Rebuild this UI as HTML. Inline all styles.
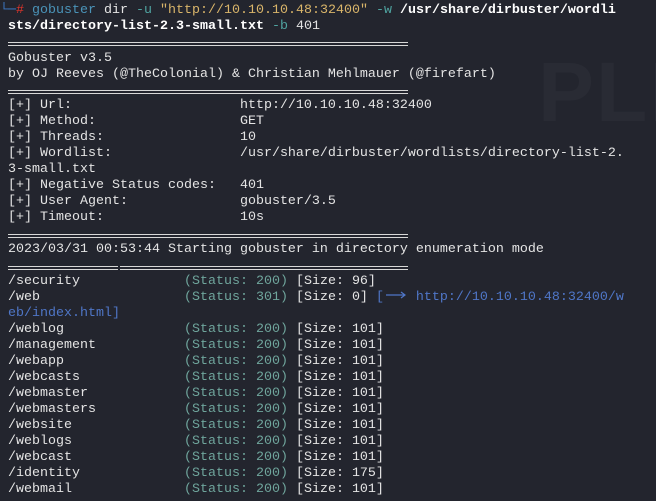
<!DOCTYPE html>
<html><head><meta charset="utf-8"><style>
body{margin:0;width:656px;height:501px;background:#23252e;overflow:hidden;position:relative;font-family:"Liberation Mono",monospace;font-size:13.33px;color:#e4e4e4}
.l{position:absolute;left:8px;height:16px;line-height:16px;white-space:pre}
.sep{position:absolute;left:8px;width:400px;height:2px;border-top:1px solid #d8d8d8;border-bottom:1px solid #d8d8d8}
.s{color:#6fa59c}.b{color:#4f76c7}.g{color:#4a93b8}.r{color:#e0352b}.p{color:#3d7ac9}.w{font-weight:bold;color:#fff}.d{color:#4fa3a0}
.wm{position:absolute;left:538px;top:44px;font-family:"Liberation Sans",sans-serif;font-weight:bold;font-size:84px;color:#292b34;letter-spacing:2px;width:118px;overflow:hidden;white-space:nowrap}
</style></head><body>
<div class="wm">PLE</div>
<div class="l" style="top:3px;left:0"><span class="p">└─</span><span class="r">#</span> <span class="g">gobuster</span> dir <span class="d">-u</span> <span style="color:#d9b56a">"http://10.10.10.48:32400"</span> <span class="d">-w</span> <span class="w">/usr/share/dirbuster/wordli</span></div>
<div class="l w" style="top:19px">sts/directory-list-2.3-small.txt <span class="d" style="font-weight:normal">-b</span> <span style="font-weight:normal;color:#e4e4e4">401</span></div>
<div class="sep" style="top:42px"></div>
<div class="l" style="top:51px">Gobuster v3.5</div>
<div class="l" style="top:67px">by OJ Reeves (@TheColonial) &amp; Christian Mehlmauer (@firefart)</div>
<div class="sep" style="top:90px"></div>
<div class="l" style="top:98px">[+] Url:                     http://10.10.10.48:32400</div>
<div class="l" style="top:114px">[+] Method:                  GET</div>
<div class="l" style="top:130px">[+] Threads:                 10</div>
<div class="l" style="top:146px">[+] Wordlist:                /usr/share/dirbuster/wordlists/directory-list-2.</div>
<div class="l" style="top:162px">3-small.txt</div>
<div class="l" style="top:178px">[+] Negative Status codes:   401</div>
<div class="l" style="top:194px">[+] User Agent:              gobuster/3.5</div>
<div class="l" style="top:210px">[+] Timeout:                 10s</div>
<div class="sep" style="top:234px"></div>
<div class="l" style="top:242px">2023/03/31 00:53:44 Starting gobuster in directory enumeration mode</div>
<div class="sep" style="top:266px;width:110px"></div>
<div class="sep" style="top:266px;left:120px;width:288px"></div>
<div class="l" style="top:274px">/security             <span class="s">(Status: 200)</span> [Size: 96]</div>
<div class="l" style="top:290px">/web                  <span class="s">(Status: 301)</span> [Size: 0] <span class="b">[<svg width="24" height="10" style="vertical-align:0px"><path d="M2 5H21M17 2L21 5L17 8" stroke="#4f76c7" stroke-width="1.2" fill="none"/></svg> http://10.10.10.48:32400/w</span></div>
<div class="l b" style="top:306px">eb/index.html]</div>
<div class="l" style="top:322px">/weblog               <span class="s">(Status: 200)</span> [Size: 101]</div>
<div class="l" style="top:338px">/management           <span class="s">(Status: 200)</span> [Size: 101]</div>
<div class="l" style="top:354px">/webapp               <span class="s">(Status: 200)</span> [Size: 101]</div>
<div class="l" style="top:370px">/webcasts             <span class="s">(Status: 200)</span> [Size: 101]</div>
<div class="l" style="top:386px">/webmaster            <span class="s">(Status: 200)</span> [Size: 101]</div>
<div class="l" style="top:402px">/webmasters           <span class="s">(Status: 200)</span> [Size: 101]</div>
<div class="l" style="top:418px">/website              <span class="s">(Status: 200)</span> [Size: 101]</div>
<div class="l" style="top:434px">/weblogs              <span class="s">(Status: 200)</span> [Size: 101]</div>
<div class="l" style="top:450px">/webcast              <span class="s">(Status: 200)</span> [Size: 101]</div>
<div class="l" style="top:466px">/identity             <span class="s">(Status: 200)</span> [Size: 175]</div>
<div class="l" style="top:482px">/webmail              <span class="s">(Status: 200)</span> [Size: 101]</div>
</body></html>
